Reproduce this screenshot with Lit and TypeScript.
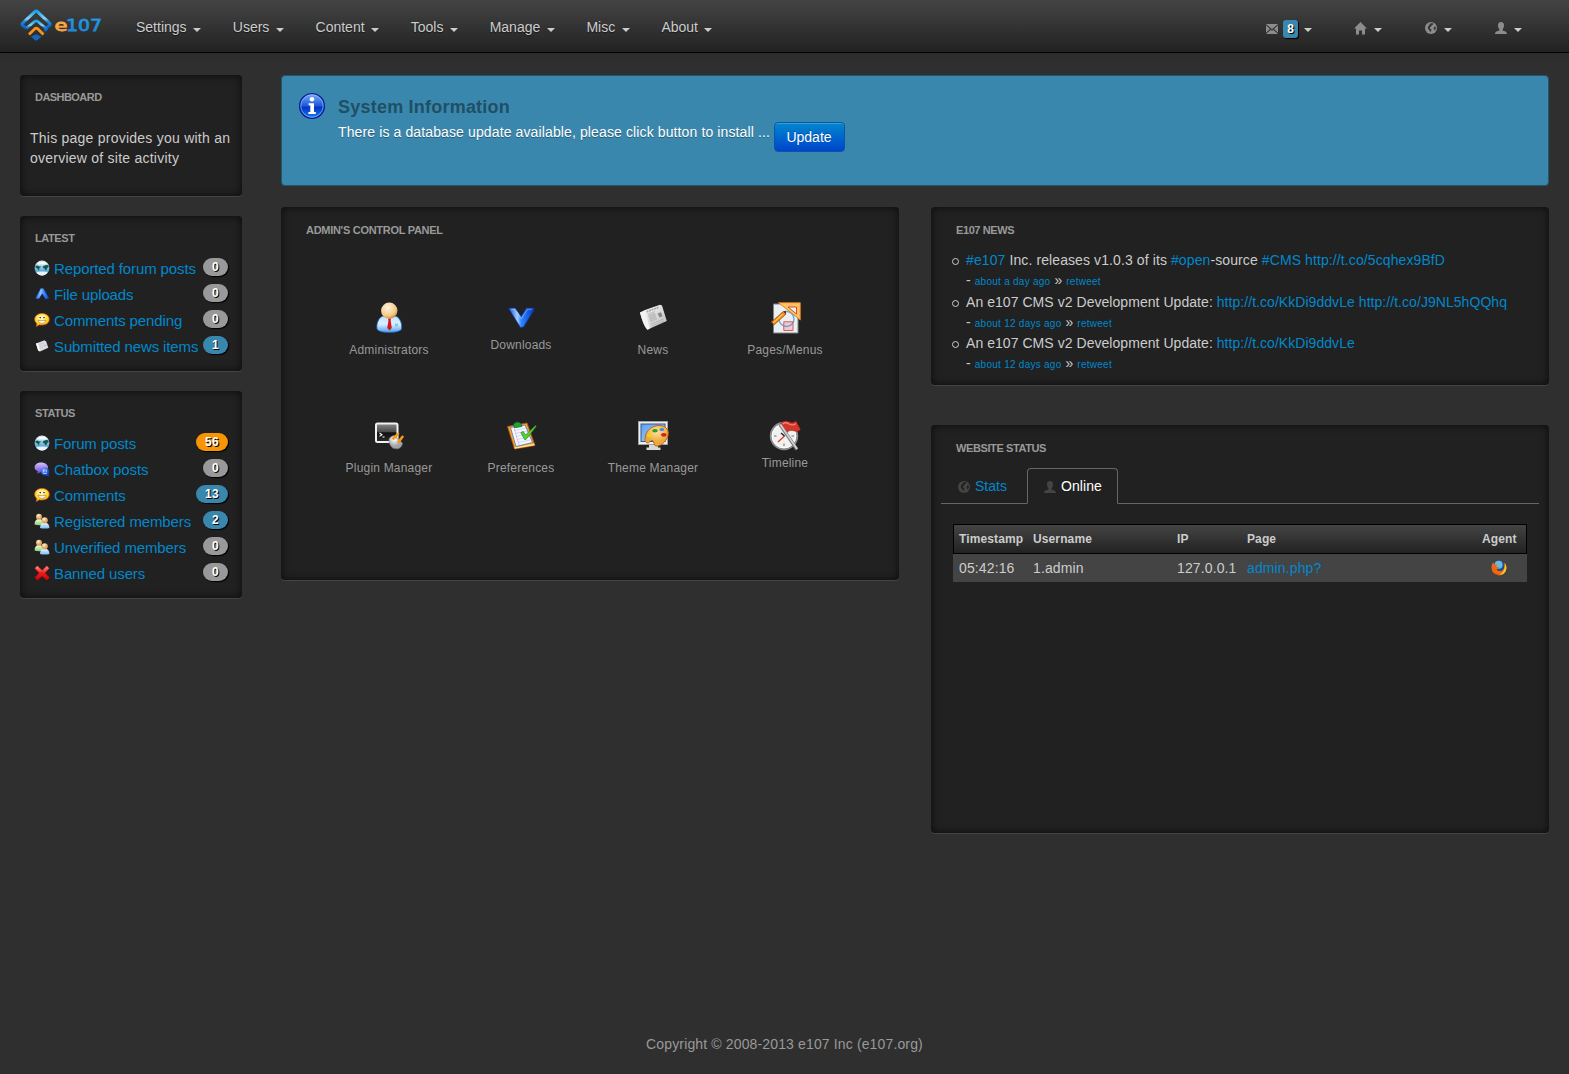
import { LitElement, html, svg, css, TemplateResult } from "lit";
import { customElement } from "lit/decorators.js";
import { classMap } from "lit/directives/class-map.js";

type Tone = "grey" | "blue" | "orange";
interface StatRow { icon: TemplateResult; label: string; count: number; tone: Tone; }

const pic = (size: number, body: unknown, h = size, vb = `0 0 ${size} ${h}`) =>
  html`<svg width=${size} height=${h} viewBox=${vb}>${body}</svg>`;

const globeSmall = pic(16, svg`
  <defs><linearGradient id="gs" x2="0" y2="1"><stop offset="0" stop-color="#dcebf5"/><stop offset=".35" stop-color="#a9d4ee"/><stop offset=".7" stop-color="#5fa9d6"/><stop offset="1" stop-color="#e4f4fc"/></linearGradient></defs>
  <circle cx="8" cy="8" r="7.400" fill="url(#gs)"/>
  <path d="M1.300 6 3.500 5.600 5.200 6.400 7 6.300 6.200 7.500 5.200 8 5.300 9.400 4.800 10.400 3.600 8.600 1.800 7.800zM8.600 6.700 10 5.800 12 5 14.300 5.300 14.800 7 13.400 7.700 12.600 9.400 11.400 10.400 10.700 8.600 9.200 8z" fill="#0f5a48"/>
  <path d="M2.300 12Q8 10.800 13.700 12 11.500 15.300 8 15.400 4.500 15.300 2.300 12z" fill="#eef8fd" opacity=".9"/>
  <path d="M2.300 4Q8-.6 13.700 4 8 5 2.300 4z" fill="#fff" opacity=".85"/>`);

const arrowUp = pic(16, svg`
  <defs><linearGradient id="au" x1="0" x2="1"><stop offset="0" stop-color="#1f55d8"/><stop offset=".4" stop-color="#8ec4ff"/><stop offset=".6" stop-color="#3d8dff"/><stop offset="1" stop-color="#0546c8"/></linearGradient></defs>
  <path d="M6.800 2.200 9.400 2.200 15.200 12.300 11.600 13.200 8.200 7.800 4.800 13 1.200 12.600z" fill="url(#au)" stroke="#0a2f96" stroke-width=".5"/>`);

const smile = pic(16, svg`
  <defs><radialGradient id="sm" cx=".45" cy=".35" r=".75"><stop offset="0" stop-color="#fffbc0"/><stop offset=".6" stop-color="#ffd61f"/><stop offset="1" stop-color="#f08a00"/></radialGradient></defs>
  <path d="M8 1.500C12.400 1.500 15.300 4 15.300 7.300 15.300 10.700 12.400 13 8 13 7 13 6.200 12.900 5.500 12.700L2.300 14.600 2.800 11.500C1.400 10.400.700 9 .700 7.300.700 4 3.600 1.500 8 1.500z" fill="url(#sm)" stroke="#d85c10" stroke-width=".7"/>
  <ellipse cx="6" cy="5.300" rx="1.200" ry="1.700" fill="#fff"/><ellipse cx="10.200" cy="5.300" rx="1.200" ry="1.700" fill="#fff"/>
  <circle cx="6.200" cy="5.600" r=".8" fill="#222"/><circle cx="10" cy="5.600" r=".8" fill="#222"/>
  <path d="M4 8.300Q8 9.200 12 8.300 11.300 11.400 8 11.400 4.700 11.400 4 8.300z" fill="#fff" stroke="#a65a08" stroke-width=".5"/>`);

const paperSmall = pic(16, svg`
  <path d="M2 5.500 10.500 2.300 11.500 3.300 12 3 14.300 9.800 6 13.600 4.200 12.600z" fill="#dcdce4"/>
  <path d="M2 5.500 3.800 4.900 6 13.600 4.200 12.600z" fill="#fff"/>
  <path d="M5.300 6.400 10 4.600M5.800 8.200 8.500 7.200M6.400 10 9 9" stroke="#c0c0ca" stroke-width=".6"/><path d="M10 6.800 11.800 6.200 12.400 8 10.700 8.700z" fill="#c2c2cc"/>`);

const chat = pic(16, svg`
  <defs><linearGradient id="ch" x2="0" y2="1"><stop offset="0" stop-color="#d4c2ff"/><stop offset="1" stop-color="#6945d2"/></linearGradient>
  <radialGradient id="cb" cx=".4" cy=".3"><stop offset="0" stop-color="#8bbcff"/><stop offset="1" stop-color="#1a46c8"/></radialGradient></defs>
  <path d="M7 1.500C11 1.500 14 3.800 14 6.500 14 9.300 11 11 7 11L3.200 12.700 3.800 10.300C1.800 9.300.600 8 .600 6.400.600 3.700 3.200 1.500 7 1.500z" fill="url(#ch)"/>
  <path d="M11 6.400C13.500 6.400 15.300 8.200 15.300 10.500 15.300 11.800 14.900 12.800 14.300 13.500L15.300 15.400 12.500 14.600C9 15 6.600 13 6.600 10.500 6.600 8.200 8.500 6.400 11 6.400z" fill="url(#cb)"/>
  <path d="M9.600 8.800v2M12.400 8.800v2M8.800 12Q11 13.300 13.200 12" stroke="#cfe2ff" fill="none" stroke-width=".8"/>`);

const people = pic(16, svg`
  <defs><radialGradient id="ph" cx=".4" cy=".3"><stop offset="0" stop-color="#fff2d2"/><stop offset="1" stop-color="#e0a35c"/></radialGradient>
  <linearGradient id="pg" x2="0" y2="1"><stop offset="0" stop-color="#f0ffe4"/><stop offset="1" stop-color="#8fd070"/></linearGradient>
  <linearGradient id="pb" x2="0" y2="1"><stop offset="0" stop-color="#e9f5ff"/><stop offset="1" stop-color="#7dbcf5"/></linearGradient></defs>
  <path d="M.6 11.400C.6 8 2 6 5 6 8 6 9.400 8 9.400 11.400 7 12.400 3 12.400.6 11.400z" fill="url(#pg)"/><circle cx="5" cy="3.700" r="3" fill="url(#ph)"/>
  <path d="M6 15C6 11.600 7.600 9.800 10.700 9.800 13.800 9.800 15.400 11.600 15.400 15 13 15.800 8.500 15.800 6 15z" fill="url(#pb)"/><circle cx="10.700" cy="7.300" r="3.100" fill="url(#ph)"/>`);

const cross = pic(16, svg`
  <defs><linearGradient id="cx" x2="0" y2="1"><stop offset="0" stop-color="#ff9a94"/><stop offset=".5" stop-color="#e81c1c"/><stop offset="1" stop-color="#d20000"/></linearGradient></defs>
  <path d="M3.300.800 8.200 5.200 12.900.800 15.300 3.200 11.200 8 15.400 12.600 13 15.200 8.200 11.200 3.300 15.200.900 12.600 5 8 .700 3.200z" fill="url(#cx)" stroke="#a80b0b" stroke-width=".5" stroke-linejoin="round"/>`);

const firefox = pic(16, svg`
  <circle cx="7.800" cy="7.600" r="6.800" fill="#1f4f9a"/><circle cx="7.600" cy="4.800" r="4" fill="#6bb8e4"/>
  <path d="M2.200 2.200C.300 4.500-.200 9 2 12.200 4.500 15.800 10 16.300 13.300 13 16.200 10 15.900 5.500 13.500 3 14.300 6 13.300 9.500 10.800 10.700 8.600 11.700 5.800 10.800 5.600 9 7 9.200 7.800 8.200 8.600 7.600 7.500 6.800 6 7 5.400 6.700 5.300 5.800 6 5.200 6.300 4.800 5 4.500 4 4.200 3 4.200z" fill="#ee6a12"/>
  <path d="M13.500 3C16 5.500 16.200 10 13.300 13 11.500 14.800 9 15.500 6.800 15 11 14.300 14.600 10 13.500 3z" fill="#ffc81e"/><path d="M2.500 12.400Q6 15.800 10.500 14.300 7 16.400 4 14.200z" fill="#c81e10"/>`);

const adminIcon = pic(32, svg`
  <defs><radialGradient id="ah" cx=".4" cy=".3" r=".75"><stop offset="0" stop-color="#fff3da"/><stop offset=".7" stop-color="#f3c886"/><stop offset="1" stop-color="#b87a32"/></radialGradient>
  <linearGradient id="ab" x2="0" y2="1"><stop offset="0" stop-color="#bfe2ff"/><stop offset=".5" stop-color="#d9efff"/><stop offset="1" stop-color="#4da2f4"/></linearGradient></defs>
  <path d="M4 27C3 20 7 14 11 14H21.500C25.500 14 29.500 20 28.500 27 27.500 31.500 5 31.500 4 27z" fill="url(#ab)" stroke="#246bc0" stroke-width=".8"/>
  <path d="M11 14.500 16.500 19.500 21.500 14.500z" fill="#fff"/>
  <path d="M15 16.500H18L17.700 19 18.800 26 16.500 28.500 14.200 26 15.400 19z" fill="#d8151c"/><path d="M22 21.500h3v3h-3z" fill="#82c9dd"/>
  <circle cx="16.300" cy="8.700" r="8.200" fill="url(#ah)"/>`);

const downIcon = pic(32, svg`
  <defs><linearGradient id="dn" x2="1"><stop offset="0" stop-color="#1a4fd0"/><stop offset=".35" stop-color="#9fd0ff"/><stop offset=".5" stop-color="#2f86ff"/><stop offset="1" stop-color="#0638bd"/></linearGradient></defs>
  <path d="M3.500 6.200 10 6 16.300 14.500 21.500 6 29 6 29 8 18.500 25 15.500 25.500z" fill="url(#dn)" stroke="#0a35a8" stroke-width=".6"/><path d="M6 7.500 9.500 7.500 16.200 16.800 22.500 7.300H27" stroke="#a9d6ff" stroke-width=".8" fill="none" opacity=".6"/>`);

const newsIcon = pic(32, svg`
  <defs><linearGradient id="nw" x2="1" y2="1"><stop offset="0" stop-color="#fff"/><stop offset="1" stop-color="#b8b8b8"/></linearGradient></defs>
  <path d="M3 10.500 8 8 23 2.800 25 3.500 29.800 19 13 26.500 10.500 27.800C7.500 25 5 18 3 10.500z" fill="url(#nw)"/>
  <path d="M3 10.500 8 8.800 13 26.500 10.500 27.800C7.500 25 5 18 3 10.500z" fill="#f3f3f3"/>
  <path d="M9.500 9.800 22 5.200" stroke="#a9a9a9" stroke-width="1.800" stroke-dasharray="2 .7"/>
  <path d="M11 13 18 10.500 20 17.500 13.500 20.200z" fill="#c0c0c0"/><path d="M20.500 11.500 24 10.300 25.500 14.300 22.500 15.600z" fill="#85888c"/>
  <path d="M14 22 26.500 17M14.700 24 27 19M10.800 12 18 9.500" stroke="#aaa" stroke-width=".7"/>`);

const pagesIcon = pic(32, svg`
  <path d="M4.500 2H29V31H4.500z" fill="#eceff2" stroke="#7d8389"/>
  <circle cx="17.500" cy="17" r="7.500" fill="none" stroke="#68a9e4" stroke-width="1.400"/><path d="M14.800 19.800H24V28.500H14.800z" fill="#dc4b5233" stroke="#d55a60"/>
  <path d="M9.500.700H31.300V18z" fill="#ffc163" stroke="#d97d1d" stroke-width=".9"/><path d="M19 5H27.500V12z" fill="#eceff2" stroke="#d5401a" stroke-width=".9"/>
  <path d="M14.500 9.500 17 12 5.300 22.700 2.300 20z" fill="#f68510" stroke="#a74706" stroke-width=".8"/><path d="M14.500 9.500 16.800 8.700 17 12z" fill="#4c2410"/><path d="M14 12 4.500 20.700" stroke="#ffd06b" stroke-width="1.100"/>`);

const pluginIcon = pic(32, svg`
  <defs><linearGradient id="pl" x2="0" y2="1"><stop offset="0" stop-color="#8b8b8b"/><stop offset=".45" stop-color="#4a4a4a"/><stop offset=".5" stop-color="#111"/><stop offset="1" stop-color="#2b2b2b"/></linearGradient>
  <radialGradient id="pp" cx=".4" cy=".3"><stop offset="0" stop-color="#fff"/><stop offset="1" stop-color="#a2a4aa"/></radialGradient></defs>
  <rect x="3" y="3.500" width="21.500" height="18.500" rx="1.500" fill="url(#pl)" stroke="#f1f1f1" stroke-width="2"/>
  <path d="M6.500 13 9 14.700 6.500 16.400M9.500 17H11.500" stroke="#fff" stroke-width="1.100" fill="none"/>
  <path d="M16 19C17 16.500 21 15.500 21 15.500L29.500 23C29 27.500 25.500 29.500 22.500 28.600 18.500 29 15.800 24 16 19z" fill="url(#pp)" stroke="#77797e" stroke-width=".6"/>
  <path d="M20.500 18.500 25 13.800M25.500 22 29.500 16.800" stroke="#f79a10" stroke-width="2.600" stroke-linecap="round"/>`);

const prefIcon = pic(32, svg`
  <path d="M2.500 6.500 22 3 30 25.500 9.500 29z" fill="#f6a62c" stroke="#b3500c" stroke-width=".9" stroke-linejoin="round"/><path d="M9.500 28 29.500 24.500" stroke="#ffe090" stroke-width="1.400"/>
  <path d="M5.500 7.500 20 5 27.500 22.500 11 26.500z" fill="#f4f7ff" stroke="#4b77b8" stroke-width=".8"/>
  <path d="M9 10.500 21 8M10 13.500 22 11M11 16.500 23 14M12 19.500 24 17M13 22.500 25 20" stroke="#bccdf0" stroke-width=".7"/><path d="M9 8 14 25" stroke="#e3a0c8" stroke-width=".6"/>
  <path d="M8.500 4.500C10 1.500 14.500 1.500 16 3.800L17 6.500 9.500 7.800z" fill="#1fa136" stroke="#0c6a1d" stroke-width=".7"/>
  <path d="M15.800 12.500 18.200 11.500 20.500 15 30.500 5.500 31.300 6.300 21 19.500 19.500 19.500z" fill="#58cf32" stroke="#267a17" stroke-width=".6"/>`);

const themeIcon = pic(32, svg`
  <defs><linearGradient id="tm" x2="1" y2="1"><stop offset="0" stop-color="#5b9ff0"/><stop offset="1" stop-color="#b9dafa"/></linearGradient>
  <radialGradient id="tp" cx=".5" cy=".3"><stop offset="0" stop-color="#ffe2a0"/><stop offset="1" stop-color="#eda83a"/></radialGradient></defs>
  <rect x="1.500" y="1.500" width="29" height="23" fill="#efefef" stroke="#a9a9a9" stroke-width=".8"/><rect x="4" y="4" width="24" height="17.500" fill="url(#tm)" stroke="#31598c"/>
  <path d="M12 25H21V27.500H23.500V30H9.500V27.500H12z" fill="#d8d8d8"/>
  <path d="M8 19C8 10.500 15.500 5.500 22 5.500 28 5.500 31.500 9 31.300 13.500 31 19.500 25 26.500 19 26 16.500 25.500 17.500 22 15.500 20.500 13.500 19.500 12.500 23.500 10.500 23 8.700 22.500 8 21 8 19z" fill="url(#tp)" stroke="#a96414" stroke-width=".9"/>
  <ellipse cx="12.500" cy="15" rx="2.500" ry="1.700" fill="#f2d21a"/><ellipse cx="18" cy="10.800" rx="2.800" ry="1.700" fill="#2f9a2c"/><ellipse cx="24.800" cy="9.500" rx="2.400" ry="1.500" fill="#3f8be8"/><ellipse cx="26.800" cy="14.800" rx="2.800" ry="1.900" fill="#d3211b"/>`);

const timeIcon = pic(32, svg`
  <circle cx="15" cy="16" r="13.200" fill="#f1f1f1" stroke="#8d8d8d" stroke-width="2"/><circle cx="15" cy="16" r="11.800" fill="none" stroke="#fff" stroke-width="1"/>
  <path d="M15 6v2.500M15 23.500V26M5 16H7.500M22.500 16H25" stroke="#9b9b9b" stroke-width="1.600"/><path d="M15.500 16 9 22" stroke="#e03a1c" stroke-width="1.300"/><path d="M15.500 16 12 13" stroke="#222" stroke-width="1.500"/>
  <path d="M11 4.500C14 .500 17 .500 20 1.800 23 3 25.500 2.500 27 .800L31.500 9.500C29 12.500 26 11 23.500 10.500 21 10 19.500 11 18 12.500z" fill="#d5362a" stroke="#8c150d" stroke-width=".6"/><path d="M13.500 4Q17 1.500 20 4 24 6 27 3.500" stroke="#f28374" stroke-width="1.300" fill="none"/>
  <path d="M11 4.500 28 29.500" stroke="#777" stroke-width="3.200"/><path d="M11.300 4.500 28 29" stroke="#d4d4d4" stroke-width="1.700"/>`);

const infoIcon = pic(28, svg`
  <defs><linearGradient id="in" x2="0" y2="1"><stop offset="0" stop-color="#7aaef8"/><stop offset=".5" stop-color="#1d55dc"/><stop offset=".55" stop-color="#0334bf"/><stop offset="1" stop-color="#1c7bf8"/></linearGradient></defs>
  <circle cx="14" cy="14" r="12.400" fill="url(#in)" stroke="#0a1f8c" stroke-width="1.300"/><circle cx="14" cy="14" r="11.200" fill="none" stroke="#90bbff" stroke-width=".7"/>
  <circle cx="14" cy="7.300" r="2.300" fill="#fff"/><path d="M10.600 11.300H16V20H17.800V22H10.400V20H12.300V13.200H10.600z" fill="#fff"/>`);

const gGlobe = svg`<circle cx="6" cy="6" r="6" fill="currentColor"/><path d="M5.500 1.300 8.300 1.300 8 2.800 6.700 3.200 6.200 4.600 4.600 5.400 5.200 6.800 6.600 7.400 6 9 5 10.300 4.500 8.300 2.800 6.600 2.800 5zM9.200 4.700 10.600 4.400 10.800 6.700 9.700 8.400 8.600 6.500z" fill="var(--cut,#343434)"/>`;
const gUser = svg`<path d="M6 0C8.200 0 9 1.500 9 3.500 9 5 8.500 6 7.700 6.900V8.500C9.500 9 12 9.500 12 12H0C0 9.500 2.500 9 4.300 8.500V6.900C3.500 6 3 5 3 3.500 3 1.500 3.800 0 6 0z" fill="currentColor"/>`;
const gMail = svg`<path d="M0 1H12L6 6.300zM0 2.300 4 6 0 9.800zM12 2.300V9.800L8 6zM4.800 6.700 6 7.800 7.200 6.700 12 11H0z" fill="currentColor"/>`;
const gHome = svg`<path d="M6.500 0 13 6.500H11V12.500H8V8.500H5V12.500H2V6.500H0z" fill="currentColor"/>`;

const logo = html`<svg width="84" height="34" viewBox="0 0 84 34">
  <defs><linearGradient id="lg" x2="0" y2="1"><stop offset="0" stop-color="#12a4ec"/><stop offset=".45" stop-color="#8fd0f6"/><stop offset=".6" stop-color="#1a8ae0"/><stop offset="1" stop-color="#0a5fc0"/></linearGradient>
  <linearGradient id="lt" x2="0" y2="1"><stop offset="0" stop-color="#2fb4f5"/><stop offset="1" stop-color="#1269c4"/></linearGradient>
  <linearGradient id="lo" x2="0" y2="1"><stop offset="0" stop-color="#ffd28a"/><stop offset="1" stop-color="#f58a10"/></linearGradient></defs>
  <path d="M6.300 20.200 2.500 17.300Q1.600 16.300 2.500 15.300L14.800 3.600Q16.200 2.500 17.500 3.600L29.700 15.300Q30.500 16.300 29.700 17.300L26 20.200" fill="none" stroke="url(#lg)" stroke-width="3"/>
  <path d="M6.300 20.500 14.700 13.300Q16.200 12.300 17.700 13.300L26.300 20.800 24.500 23" fill="none" stroke="url(#lg)" stroke-width="2.800"/>
  <path d="M9 26.500 14.800 20.700Q16.200 19.700 17.600 20.700L23.500 26.500" fill="none" stroke="#f7941d" stroke-width="2.800"/>
  <path d="M10.800 28.300Q13 28.500 15 26.500H17.500Q19.300 28.500 21.600 28.300L17.500 32.200Q16.200 33 15 32.200z" fill="#1667b8"/>
  <text class="lt" x="34.500" y="23" textLength="13" lengthAdjust="spacingAndGlyphs" fill="url(#lo)" stroke="#f8a640">e</text>
  <text class="lt" x="46" y="23" textLength="36" lengthAdjust="spacingAndGlyphs" fill="url(#lt)" stroke="#1f8ddd">107</text>
</svg>`;

const LATEST: StatRow[] = [
  { icon: globeSmall, label: "Reported forum posts", count: 0, tone: "grey" },
  { icon: arrowUp, label: "File uploads", count: 0, tone: "grey" },
  { icon: smile, label: "Comments pending", count: 0, tone: "grey" },
  { icon: paperSmall, label: "Submitted news items", count: 1, tone: "blue" },
];
const STATUS: StatRow[] = [
  { icon: globeSmall, label: "Forum posts", count: 56, tone: "orange" },
  { icon: chat, label: "Chatbox posts", count: 0, tone: "grey" },
  { icon: smile, label: "Comments", count: 13, tone: "blue" },
  { icon: people, label: "Registered members", count: 2, tone: "blue" },
  { icon: people, label: "Unverified members", count: 0, tone: "grey" },
  { icon: cross, label: "Banned users", count: 0, tone: "grey" },
];
const TILES: [TemplateResult, string, boolean][] = [
  [adminIcon, "Administrators", false], [downIcon, "Downloads", true], [newsIcon, "News", false], [pagesIcon, "Pages/Menus", false],
  [pluginIcon, "Plugin Manager", false], [prefIcon, "Preferences", false], [themeIcon, "Theme Manager", false], [timeIcon, "Timeline", true],
];

@customElement("app-root")
export class AppRoot extends LitElement {
  static styles = css`
    :host { display: block; font: 14px/20px "Liberation Sans", Arial, sans-serif; color: #ccc; }
    * { box-sizing: border-box; }
    svg { display: block; flex: none; }
    a { color: #0088cc; text-decoration: none; }
    .page { min-height: 1074px; background: #2f2f2f; display: flex; flex-direction: column; }
    .nav { height: 53px; background: linear-gradient(#444, #222); border-bottom: 1px solid #000; box-shadow: 0 1px 10px rgba(0,0,0,.1); display: flex; padding: 0 33px 0 20px; }
    .brand { width: 101px; padding-top: 8px; }
    .lt { font: 15.500px "DejaVu Sans", sans-serif; stroke-width: .8px; }
    .menu { display: flex; flex: 1; }
    .item { display: flex; padding: 17px 16.700px 0 15px; height: 52px; color: #ccc; gap: 6.500px; text-shadow: 0 1px 1px rgba(0,0,0,.5); }
    .caret { width: 0; height: 0; border: 4px solid transparent; border-top-color: #ccc; border-bottom: 0; margin-top: 11px; }
    .right { display: flex; }
    .tool { display: flex; width: 70px; justify-content: flex-end; padding: 22px 14px 0 0; color: #8c8c8c; }
    .tool .caret { margin: 6px 0 0 7px; }
    .tool.mail { width: 80px; }
    .tool.mail svg { margin: 1px 5px 0 0; }
    .sq { background: #3a87ad; color: #fff; font: bold 12px/18px "Liberation Sans", sans-serif; width: 15px; height: 18px; margin-top: -2px; text-align: center; border-radius: 3px; text-shadow: 1px 1px 0 #000; box-shadow: 1px 1px 1px #000; }
    .tool .sq + .caret { margin-left: 6px; }
    .body { display: flex; padding: 22px 20px 0 20px; flex: 1; }
    .side { width: 222px; margin-right: 39px; display: flex; flex-direction: column; gap: 20px; }
    .main { flex: 1; }
    .panel { background: #212121; border-radius: 4px; box-shadow: inset 0 0 8px rgba(0,0,0,.7), 0 1px 0 #444; }
    .panel.intro { height: 121px; padding: 12px 10px; }
    .panel.latest { height: 155px; padding: 12px 14px; }
    .panel.status { height: 207px; padding: 12px 14px; }
    .intro h2 { padding-left: 5px; letter-spacing: -.55px; }
    .latest h2, .status h2 { padding-left: 1px; margin-bottom: 8px; }
    h2 { font-size: 11px; line-height: 20px; font-weight: bold; color: #999; margin: 0; letter-spacing: -.4px; text-transform: uppercase; }
    .control h2 { letter-spacing: -.29px; }
    .intro p { margin: 21px 0 0; letter-spacing: .24px; white-space: nowrap; }
    .stat { display: flex; height: 26px; font-size: 15px; letter-spacing: -.12px; white-space: nowrap; }
    .stat a { flex: 1; margin: 3px 0 0 4px; }
    .stat svg { margin-top: 4px; }
    .badge { font: bold 12px/18px "Liberation Sans", sans-serif; letter-spacing: .3px; height: 18px; padding: 0 9px; border-radius: 9px; color: #fff; background: #999; text-shadow: 1px 1px 0 #000; box-shadow: 1px 1px 1px #000; margin-top: 2px; }
    .blue { background: #3a87ad; } .orange { background: #f89406; }
    .alert { height: 111px; border: 1px solid #23566e; border-radius: 4px; background: #3a87ad; color: #fff; display: flex; margin-bottom: 21px; padding: 16px 16px; }
    .alert h4 { margin: 5px 0 5px; font-size: 18px; line-height: 20px; color: #1f4f66; letter-spacing: .22px; }
    .alert .msg { display: flex; gap: 3.500px; text-shadow: 0 1px 0 rgba(0,0,0,.35); letter-spacing: .12px; }
    .alert .txt { margin-left: 12px; }
    .btn { font: 14px/20px "Liberation Sans", sans-serif; color: #fff; border: 1px solid #0a55a8; border-radius: 4px; background: linear-gradient(#0088cc, #0044cc); box-shadow: inset 0 1px 0 rgba(255,255,255,.2); height: 30px; width: 71px; padding: 0; text-shadow: 0 -1px 0 rgba(0,0,0,.25); margin-top: 0; }
    .cols { display: flex; gap: 32px; align-items: flex-start; }
    .panel.control { width: 618px; height: 373px; padding: 13px 25px; }
    .tiles { display: grid; grid-template-columns: repeat(4, 132px); grid-auto-rows: 118px; padding: 62px 0 0 17px; }
    .tile { display: flex; flex-direction: column; align-items: center; gap: 6px; font-size: 12px; letter-spacing: .2px; color: #999; }
    .tile.tight { gap: 1px; }
    .col { width: 618px; display: flex; flex-direction: column; gap: 40px; }
    .panel.news { height: 178px; padding: 13px 25px; }
    ul { list-style: none; margin: 10px 0 0 -5px; padding: 0; }
    li { height: 41.500px; display: flex; white-space: nowrap; letter-spacing: .05px; }
    li:first-child { letter-spacing: .1px; }
    .dot { width: 7px; height: 7px; border: 1.500px solid #ccc; border-radius: 50%; margin: 8px 7px 0 1px; }
    .meta { line-height: 21px; letter-spacing: .1px; }
    .meta a { font-size: 10px; letter-spacing: .26px; }
    .panel.site { height: 408px; padding: 13px 10px; }
    .site h2 { padding-left: 15px; }
    .tabs { display: flex; height: 36px; margin-top: 10px; border-bottom: 1px solid #666; }
    .tab { --cut: #212121; display: flex; padding: 8px 15px 0 17px; color: #0088cc; height: 36px; }
    .tab svg { color: #444; margin: 5px 5px 0 0; }
    .tab.on { color: #fff; border: 1px solid #666; border-bottom-color: #212121; border-radius: 4px 4px 0 0; background: #212121; padding: 7px 15.500px 0 16px; margin-left: 5px; letter-spacing: .1px; }
    .table { margin: 20px 12px 0; width: 574px; }
    .row { display: grid; grid-template-columns: 74px 144px 70px 235px 1fr; padding-left: 6px; height: 28px; align-items: center; background: #444; letter-spacing: .12px; }
    .row.head { height: 30px; padding-left: 5px; border: 1px solid #000; font-size: 12px; font-weight: bold; background: linear-gradient(#444, #222); }
    .agent { display: flex; justify-content: center; padding-right: 12px; }
    .head .agent { padding-right: 11px; }
    .row:not(.head) .agent { padding-right: 11px; }
    .foot { text-align: center; color: #999; letter-spacing: .14px; padding-bottom: 20px; }
  `;

  private stats(rows: StatRow[]) {
    return rows.map(r => html`<div class="stat">${r.icon}<a>${r.label}</a><span class=${classMap({ badge: true, [r.tone]: true })}>${r.count}</span></div>`);
  }

  private post(body: TemplateResult, age: string) {
    return html`<li><i class="dot"></i><div><div>${body}</div><div class="meta">- <a>${age}</a> » <a>retweet</a></div></div></li>`;
  }

  render() {
    return html`<div class="page">
      <nav class="nav">
        <div class="brand">${logo}</div>
        <div class="menu">${["Settings", "Users", "Content", "Tools", "Manage", "Misc", "About"].map(t => html`<a class="item">${t}<i class="caret"></i></a>`)}</div>
        <div class="right">
          <div class="tool mail">${pic(12, gMail)}<span class="sq">8</span><i class="caret"></i></div>
          <div class="tool">${pic(13, gHome)}<i class="caret"></i></div>
          <div class="tool">${pic(12, gGlobe)}<i class="caret"></i></div>
          <div class="tool">${pic(12, gUser)}<i class="caret"></i></div>
        </div>
      </nav>
      <div class="body">
        <aside class="side">
          <section class="panel intro"><h2>Dashboard</h2><p>This page provides you with an<br>overview of site activity</p></section>
          <section class="panel latest"><h2>Latest</h2>${this.stats(LATEST)}</section>
          <section class="panel status"><h2>Status</h2>${this.stats(STATUS)}</section>
        </aside>
        <main class="main">
          <div class="alert">${infoIcon}<div class="txt"><h4>System Information</h4>
            <div class="msg"><span>There is a database update available, please click button to install ...</span><button class="btn">Update</button></div></div></div>
          <div class="cols">
            <section class="panel control"><h2>Admin's Control Panel</h2>
              <div class="tiles">${TILES.map(([i, t, tight]) => html`<div class=${classMap({ tile: true, tight })}>${i}<span>${t}</span></div>`)}</div>
            </section>
            <div class="col">
              <section class="panel news"><h2>e107 News</h2><ul>
                ${this.post(html`<a>#e107</a> Inc. releases v1.0.3 of its <a>#open</a>-source <a>#CMS</a> <a>http://t.co/5cqhex9BfD</a>`, "about a day ago")}
                ${this.post(html`An e107 CMS v2 Development Update: <a>http://t.co/KkDi9ddvLe</a> <a>http://t.co/J9NL5hQQhq</a>`, "about 12 days ago")}
                ${this.post(html`An e107 CMS v2 Development Update: <a>http://t.co/KkDi9ddvLe</a>`, "about 12 days ago")}
              </ul></section>
              <section class="panel site"><h2>Website Status</h2>
                <div class="tabs"><div class="tab">${pic(12, gGlobe)}Stats</div><div class="tab on">${pic(12, gUser)}Online</div></div>
                <div class="table">
                  <div class="row head"><span>Timestamp</span><span>Username</span><span>IP</span><span>Page</span><span class="agent">Agent</span></div>
                  <div class="row"><span>05:42:16</span><span>1.admin</span><span>127.0.0.1</span><a>admin.php?</a><span class="agent">${firefox}</span></div>
                </div>
              </section>
            </div>
          </div>
        </main>
      </div>
      <footer class="foot">Copyright © 2008-2013 e107 Inc (e107.org)</footer>
    </div>`;
  }
}
